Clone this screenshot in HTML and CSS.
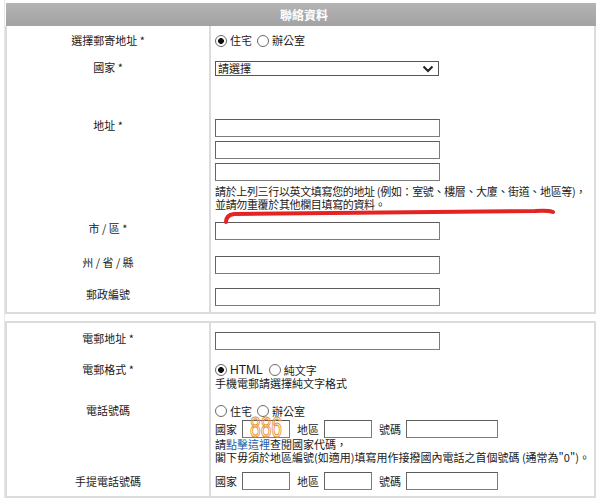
FILE: index.html
```html
<!DOCTYPE html>
<html lang="zh-Hant">

<head>
    <meta charset="UTF-8">
    <meta name="viewport" content="width=device-width, initial-scale=1.0">
    <title>聯絡資料</title>
    <link rel="stylesheet" href="styles.css">
</head>

<body>
    <div class="page">
        <div class="section-title">聯絡資料</div>

        <div class="form-table first">
            <div class="row row-mail">
                <div class="label">選擇郵寄地址 *</div>
                <div class="field">
                    <div class="radios">
                        <label><input type="radio" name="mail" checked> 住宅</label>
                        <label><input type="radio" name="mail"> 辦公室</label>
                    </div>
                </div>
            </div>
            <div class="row row-country">
                <div class="label">國家 *</div>
                <div class="field">
                    <div class="select">
                        <span>請選擇</span>
                        <svg width="12" height="8" viewBox="0 0 12 8"><path d="M1.5 1.5 L6 6 L10.5 1.5" fill="none" stroke="#222" stroke-width="2"/></svg>
                    </div>
                </div>
            </div>
            <div class="row row-address">
                <div class="label">地址 *</div>
                <div class="field">
                    <input type="text" class="text-input">
                    <input type="text" class="text-input">
                    <input type="text" class="text-input">
                    <p class="hint">請於上列三行以英文填寫您的地址 (例如：室號、樓層、大廈、街道、地區等)，<br>並請勿重覆於其他欄目填寫的資料。</p>
                </div>
            </div>
            <div class="row row-city">
                <div class="label">市 / 區 *</div>
                <div class="field"><input type="text" class="text-input"></div>
            </div>
            <div class="row row-state">
                <div class="label">州 / 省 / 縣</div>
                <div class="field"><input type="text" class="text-input"></div>
            </div>
            <div class="row row-zip">
                <div class="label">郵政編號</div>
                <div class="field"><input type="text" class="text-input"></div>
            </div>
        </div>

        <div class="form-table second">
            <div class="row row-email">
                <div class="label">電郵地址 *</div>
                <div class="field"><input type="text" class="text-input"></div>
            </div>
            <div class="row row-format">
                <div class="label">電郵格式 *</div>
                <div class="field">
                    <div class="radios">
                        <label class="latin"><input type="radio" name="fmt" checked> HTML</label>
                        <label><input type="radio" name="fmt"> 純文字</label>
                    </div>
                    <p class="hint">手機電郵請選擇純文字格式</p>
                </div>
            </div>
            <div class="row row-phone">
                <div class="label">電話號碼</div>
                <div class="field">
                    <div class="radios">
                        <label><input type="radio" name="tel"> 住宅</label>
                        <label><input type="radio" name="tel"> 辦公室</label>
                    </div>
                    <div class="phone-line">
                        <span>國家</span><input type="text" class="text-input short">
                        <span>地區</span><input type="text" class="text-input short">
                        <span>號碼</span><input type="text" class="text-input long">
                    </div>
                    <p class="hint">請<a href="#">點擊這裡</a>查閱國家代碼，<br>閣下毋須於地區編號(如適用)填寫用作接撥國內電話之首個號碼 (通常為"0")。</p>
                </div>
            </div>
            <div class="row row-mobile">
                <div class="label">手提電話號碼</div>
                <div class="field">
                    <div class="phone-line">
                        <span>國家</span><input type="text" class="text-input short">
                        <span>地區</span><input type="text" class="text-input short">
                        <span>號碼</span><input type="text" class="text-input long">
                    </div>
                </div>
            </div>
        </div>
    </div>

    <!-- hand-drawn marks on the screenshot -->
    <svg class="marks" width="600" height="501" viewBox="0 0 600 501">
        <path d="M226 222 Q226 215 234 214 L535 211 Q548 210 553 212" fill="none" stroke="#e42323" stroke-width="4" stroke-linecap="round"/>
        <text x="250" y="437" textLength="32" lengthAdjust="spacingAndGlyphs" font-family="Liberation Sans, sans-serif" font-size="30" fill="none" stroke="#e8922e" stroke-width="1.2">886</text>
    </svg>
</body>

</html>
```

FILE: styles.css
```css
body {
    margin: 0;
    padding: 0;
    background-color: #fff;
    font-family: 'Noto Sans CJK TC', 'Liberation Sans', sans-serif;
    font-size: 11px;
    line-height: 13px;
    color: #1a1a1a;
    position: relative;
}

.page {
    margin-left: 4px;
    width: 591px;
    padding-top: 3px;
    border-left: 1px solid #e6e6e6;
}

.section-title {
    height: 23px;
    line-height: 23px;
    margin-left: 1px;
    background: linear-gradient(#b4b4b4, #a2a2a2);
    color: #fff;
    font-weight: bold;
    font-size: 12px;
    text-align: center;
    padding-left: 6px;
}

.form-table {
    border: 2px solid #dcdcdc;
    border-top: none;
}

.form-table.second {
    margin-top: 7px;
    border-top: 2px solid #dcdcdc;
}

.row {
    display: grid;
    grid-template-columns: 204px 1fr;
}

.label {
    text-align: center;
    border-right: 2px solid #dcdcdc;
    padding-top: 6px;
}

.field {
    padding: 6px 0 0 4px;
    min-width: 0;
}

.row-mail .label,
.row-mail .field {
    padding-top: 8px;
}

.row-mail .field {
    padding-bottom: 8px;
}

.row-country .field {
    padding-bottom: 37px;
}

.row-address .field {
    padding-bottom: 5px;
}

.row-city .field {
    padding-bottom: 10px;
}

.row-state .field {
    padding-bottom: 8px;
}

.row-zip .field {
    padding-bottom: 6px;
}

.row-email .label,
.row-email .field {
    padding-top: 9px;
}

.row-email .field {
    padding-bottom: 7px;
}

.row-format .field {
    padding-bottom: 8px;
}

.row-phone .field {
    padding-bottom: 2px;
}

.row-mobile .label {
    padding-top: 9px;
}

.row-mobile .field {
    padding-bottom: 6px;
}

.radios {
    display: flex;
    align-items: center;
    height: 14px;
}

.row-mail .radios {
    height: 13px;
}

.radios label {
    display: flex;
    align-items: center;
    margin-right: 5px;
}

.radios label.latin {
    font-family: 'Liberation Sans', sans-serif;
    font-size: 12px;
    margin-right: 6px;
}

input[type="radio"] {
    appearance: none;
    -webkit-appearance: none;
    width: 12px;
    height: 12px;
    margin: 0 3px 0 0;
    border: 1px solid #6a6a6a;
    border-radius: 50%;
    background: #fff;
}

input[type="radio"]:checked {
    background: radial-gradient(circle, #111 2.6px, #fff 3.2px);
}

.text-input {
    display: block;
    box-sizing: border-box;
    width: 225px;
    height: 18px;
    margin: 0;
    padding: 0;
    border: 1px solid #7c7c7c;
    border-top-color: #5c5c5c;
    border-left-color: #666;
    background: #fff;
}

.row-address .text-input + .text-input {
    margin-top: 4px;
}

.hint {
    margin: 0;
    white-space: nowrap;
}

.row-address .hint {
    margin-top: 4px;
    letter-spacing: -0.35px;
}

.hint a {
    color: #1e5ea6;
    text-decoration: none;
}

.select {
    box-sizing: border-box;
    width: 224px;
    height: 15px;
    border: 1px solid #555;
    display: flex;
    align-items: center;
    justify-content: space-between;
    padding: 0 4px 0 2px;
    font-size: 11px;
}

.phone-line {
    display: flex;
    align-items: center;
    margin-top: 2px;
    height: 18px;
}

.row-mobile .phone-line {
    margin-top: 0;
}

.phone-line .text-input {
    display: inline-block;
    margin-left: 5px;
    margin-right: 7px;
}

.phone-line .text-input.short {
    width: 48px;
}

.phone-line .text-input.long {
    width: 92px;
    margin-left: 5px;
}

.marks {
    position: absolute;
    left: 0;
    top: 0;
    pointer-events: none;
}
```
